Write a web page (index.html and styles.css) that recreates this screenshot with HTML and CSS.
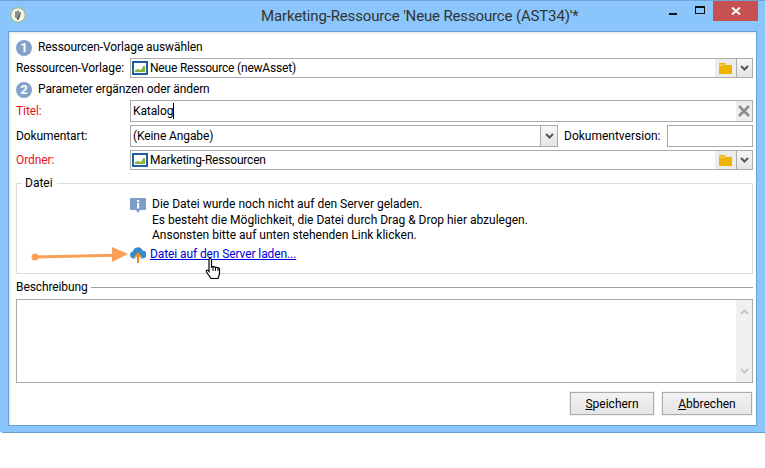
FILE: index.html
```html
<!DOCTYPE html>
<html lang="de">
<head>
<meta charset="utf-8">
<title>Marketing-Ressource</title>
<link rel="stylesheet" href="styles.css">
</head>
<body>
<div class="window">
  <header class="titlebar">
    <span class="appicon"><svg width="16" height="16" viewBox="0 0 16 16"><circle cx="8" cy="8" r="7.2" fill="#f4f4ee" stroke="#9cbb58" stroke-width="1"/><path d="M6 4.5v6.5M8 3.5v7M10.200 5l-1 5.500" stroke="#555" stroke-width="1.300" fill="none"/><circle cx="8" cy="11.500" r="1.300" fill="#555"/></svg></span>
    <span class="title">Marketing-Ressource 'Neue Ressource (AST34)'*</span>
    <span class="winbtn minimize"><i></i></span>
    <span class="winbtn maximize"><i></i></span>
    <span class="winbtn close"><svg width="10" height="10" viewBox="0 0 10 10"><path d="M1 1.500l8 7M9 1.500l-8 7" stroke="#fff" stroke-width="2"/></svg></span>
  </header>
  <main class="client">
    <div class="step"><span class="badge">1</span>Ressourcen-Vorlage auswählen</div>
    <div class="row row-template">
      <label class="label">Ressourcen-Vorlage:</label>
      <div class="field grow">
        <svg class="folder-thumb" width="16" height="14" viewBox="0 0 16 14"><rect x="1" y="1" width="14" height="12" fill="#fff" stroke="#1f5f9e" stroke-width="2"/><path d="M3 11V9l3-1 2 1 2-1 1-3 2 0v6z" fill="#8cb33e"/></svg>
        <span class="value">Neue Ressource (newAsset)</span>
      </div>
      <span class="sidebtn"><svg width="13" height="11" viewBox="0 0 13 11"><path d="M0 0h6l1 2h6v9H0z" fill="#f0b400"/><path d="M0 2h6" stroke="#f9d98a"/></svg></span>
      <span class="drop"><svg width="9" height="6" viewBox="0 0 9 6"><path d="M1 1l3.500 3.500L8 1" stroke="#555" stroke-width="2" fill="none"/></svg></span>
    </div>
    <div class="step step-two"><span class="badge">2</span>Parameter ergänzen oder ändern</div>
    <div class="row row-title">
      <label class="label required">Titel:</label>
      <div class="field grow tall"><span class="typed">Katalog</span><span class="clear"><svg width="12" height="12" viewBox="0 0 12 12"><path d="M1 1l10 10M11 1L1 11" stroke="#8c8c8c" stroke-width="2.500"/></svg></span></div>
    </div>
    <div class="row row-kind">
      <label class="label">Dokumentart:</label>
      <div class="field kind tall"><span class="plain">(Keine Angabe)</span><span class="drop inner"><svg width="9" height="6" viewBox="0 0 9 6"><path d="M1 1l3.500 3.500L8 1" stroke="#555" stroke-width="2" fill="none"/></svg></span></div>
      <label class="label-version">Dokumentversion:</label>
      <div class="field version tall"></div>
    </div>
    <div class="row row-folder">
      <label class="label required">Ordner:</label>
      <div class="field grow">
        <svg class="folder-thumb" width="16" height="14" viewBox="0 0 16 14"><rect x="1" y="1" width="14" height="12" fill="#fff" stroke="#1f5f9e" stroke-width="2"/><path d="M3 11V9l3-1 2 1 2-1 1-3 2 0v6z" fill="#8cb33e"/></svg>
        <span class="value">Marketing-Ressourcen</span>
      </div>
      <span class="sidebtn"><svg width="13" height="11" viewBox="0 0 13 11"><path d="M0 0h6l1 2h6v9H0z" fill="#f0b400"/><path d="M0 2h6" stroke="#f9d98a"/></svg></span>
      <span class="drop"><svg width="9" height="6" viewBox="0 0 9 6"><path d="M1 1l3.500 3.500L8 1" stroke="#555" stroke-width="2" fill="none"/></svg></span>
    </div>
    <section class="filebox">
      <span class="legend">Datei</span>
      <div class="notice">
        <svg class="info" width="16" height="15" viewBox="0 0 16 15"><path d="M1 0h14a1 1 0 0 1 1 1v10a1 1 0 0 1-1 1h-5l-2 3-2-3H1a1 1 0 0 1-1-1V1a1 1 0 0 1 1-1z" fill="#7d9cc8"/><rect x="7" y="2" width="2.200" height="2" fill="#fff"/><rect x="7" y="5" width="2.200" height="5.500" fill="#fff"/></svg>
        <p class="message">Die Datei wurde noch nicht auf den Server geladen.<br>Es besteht die Möglichkeit, die Datei durch Drag &amp; Drop hier abzulegen.<br>Ansonsten bitte auf unten stehenden Link klicken.</p>
      </div>
      <div class="upload">
        <svg width="16" height="17" viewBox="0 0 16 17"><path d="M3.800 12.500A3.700 3.700 0 0 1 3 5.200a5 5 0 0 1 9.500-.7A4 4 0 0 1 12.500 12.500z" fill="#3589cc"/><path d="M4.500 12.500a3.500 3.500 0 0 1 7 0z" fill="#fff"/><path d="M8 17V8.500M5 11.200L8 7.600 11 11.200" stroke="#f08a1d" stroke-width="2" fill="none"/></svg>
        <a class="link" href="#">Datei auf den Server laden...</a>
      </div>
      <svg class="arrow" width="100" height="22" viewBox="0 0 100 22"><circle cx="5" cy="13" r="3.500" fill="#f9a055"/><path d="M5 13l80-1.800" stroke="#f9a055" stroke-width="3"/><path d="M82 3l16 7-16 8z" fill="#f9a055"/></svg>
      <svg class="hand" width="18" height="24" viewBox="0 0 18 24"><path d="M5 1.500c1 0 1.500.6 1.500 1.500v7l1-.4 1 .1 1 .4 1.200-.1 1.300.6 1.200.1 1.300 1V17l-1.500 4.500H6L1.500 15c-.7-1.200.5-2.500 1.700-1.500L4 14.500V3c0-.9.200-1.500 1-1.500z" fill="#fff" stroke="#000" stroke-width="1.200"/><path d="M8 10v4M10.500 10v4M13 11v3" stroke="#000" fill="none"/></svg>
    </section>
    <div class="desc-head"><span>Beschreibung</span><i></i></div>
    <div class="desc">
      <div class="scroll"><svg width="9" height="6" viewBox="0 0 9 6"><path d="M1 5l3.500-3.500L8 5" stroke="#c8c8c8" stroke-width="2" fill="none"/></svg><svg width="9" height="6" viewBox="0 0 9 6"><path d="M1 1l3.500 3.500L8 1" stroke="#c8c8c8" stroke-width="2" fill="none"/></svg></div>
    </div>
    <div class="actions">
      <button class="btn save" type="button"><u>S</u>peichern</button>
      <button class="btn cancel" type="button"><u>A</u>bbrechen</button>
    </div>
  </main>
</div>
</body>
</html>
```
FILE: styles.css
```css
* { box-sizing: border-box; }
html, body { margin: 0; padding: 0; background: #fff; }
body { width: 765px; height: 468px; font: 12px/16px Roboto, "Noto Sans", sans-serif; color: #000; overflow: hidden; }
.window { width: 765px; height: 433px; background: #8ac6fb; border-top: 1px solid #6fa3d6; border-bottom: 1px solid #6a9fcf; padding: 0 8px 6px 8px; display: flex; flex-direction: column; border-bottom-left-radius: 4px; }
.titlebar { height: 30px; display: flex; align-items: flex-start; flex: none; position: relative; }
.appicon { width: 16px; height: 16px; margin: 6px 0 0 2px; display: block; }
.title { font-size: 15px; line-height: 20px; letter-spacing: -0.15px; color: #333; position: absolute; left: 253px; top: 5px; white-space: nowrap; }
.winbtn { display: flex; align-items: center; justify-content: center; }
.minimize { margin-left: auto; margin-right: 1px; width: 26px; height: 20px; }
.minimize i { width: 8px; height: 2px; background: #111; margin-top: 6px; }
.maximize { width: 26px; height: 20px; }
.maximize i { width: 10px; height: 8px; border: 1px solid #111; border-top-width: 2px; margin-top: -3px; }
.close { width: 45px; height: 20px; margin-right: -1px; background: #c75050; }
.client { flex: 1; background: #fff; border: 1px solid #6a9fcf; padding: 6px 3px 0 7px; box-shadow: inset 2px 2px 0 #f0f0f0; position: relative; }
.step { height: 19px; display: flex; align-items: center; gap: 6px; line-height: 19px; letter-spacing: -0.1px; }
.step-two { margin-top: 2px; }
.badge { width: 16px; height: 16px; border-radius: 50%; background: #84a2c9; color: #fff; font-weight: 700; font-size: 13px; display: flex; align-items: center; justify-content: center; flex: none; }
.row { display: flex; align-items: stretch; }
.row-template { height: 20px; margin-top: 1px; }
.row-title { height: 22px; margin-top: 1px; }
.row-kind { height: 22px; margin-top: 3px; }
.row-folder { height: 20px; margin-top: 3px; }
.label { width: 114px; flex: none; display: flex; align-items: center; white-space: nowrap; letter-spacing: -0.1px; }
.required { color: #e8101a; }
.label-version { width: 109px; padding-left: 6px; flex: none; display: flex; align-items: center; white-space: nowrap; }
.field { border: 1px solid #ababab; background: #fff; display: flex; align-items: center; gap: 2px; padding: 0 1px 0 1px; }
.value { letter-spacing: -0.2px; }
.grow { flex: 1; min-width: 0; }
.kind { width: 428px; padding: 0 0 0 2px; }
.version { width: 86px; }
.typed { border-right: 1px solid #000; line-height: 16px; margin-left: 1px; letter-spacing: -0.1px; }
.plain { flex: 1; letter-spacing: -0.1px; }
.clear { margin-left: auto; width: 16px; height: 20px; margin-right: -1px; background: #eee; display: flex; align-items: center; justify-content: center; }
.sidebtn { width: 21px; background: #ededed; border-top: 1px solid #ababab; border-bottom: 1px solid #ababab; margin-left: -1px; display: flex; align-items: center; justify-content: center; }
.drop { width: 17px; flex: none; border: 1px solid #ababab; background: linear-gradient(#f6f6f6, #e4e4e4); display: flex; align-items: center; justify-content: center; }
.drop.inner { height: 100%; margin-left: auto; border-width: 0 0 0 1px; }
.folder-thumb { flex: none; }
.filebox { height: 91px; margin-top: 13px; border: 1px solid #dcdcdc; position: relative; padding: 14px 0 0 113px; }
.legend { position: absolute; left: 5px; top: -9px; background: #fff; padding: 0 4px 0 3px; line-height: 16px; }
.notice { display: flex; gap: 6px; align-items: flex-start; }
.info { flex: none; }
.message { margin: -1px 0 0; line-height: 15.500px; }
.upload { display: flex; gap: 4px; align-items: center; margin-top: 2px; }
.link { color: #0000d8; text-decoration: underline; letter-spacing: -0.1px; }
.arrow { position: absolute; left: 13px; top: 60px; }
.hand { position: absolute; left: 188px; top: 73px; }
.desc-head { display: flex; align-items: center; gap: 3px; margin-top: 5px; height: 16px; letter-spacing: -0.1px; }
.desc-head i { flex: 1; height: 1px; background: #a0a0a0; }
.desc { height: 84px; margin-top: 4px; border: 1px solid #ababab; display: flex; justify-content: flex-end; }
.scroll { width: 16px; background: #f0f0f0; display: flex; flex-direction: column; align-items: center; justify-content: space-between; padding: 9px 0 8px; }
.actions { display: flex; justify-content: flex-end; gap: 8px; margin-top: 9px; }
.btn { font: inherit; height: 23px; padding: 0; border: 1px solid #acacac; background: linear-gradient(#f2f2f2, #e5e5e5); box-shadow: 0 0 0 1px #f2f2f2; color: #000; }
.save { width: 84px; }
.cancel { width: 90px; margin-right: 1px; }
```
